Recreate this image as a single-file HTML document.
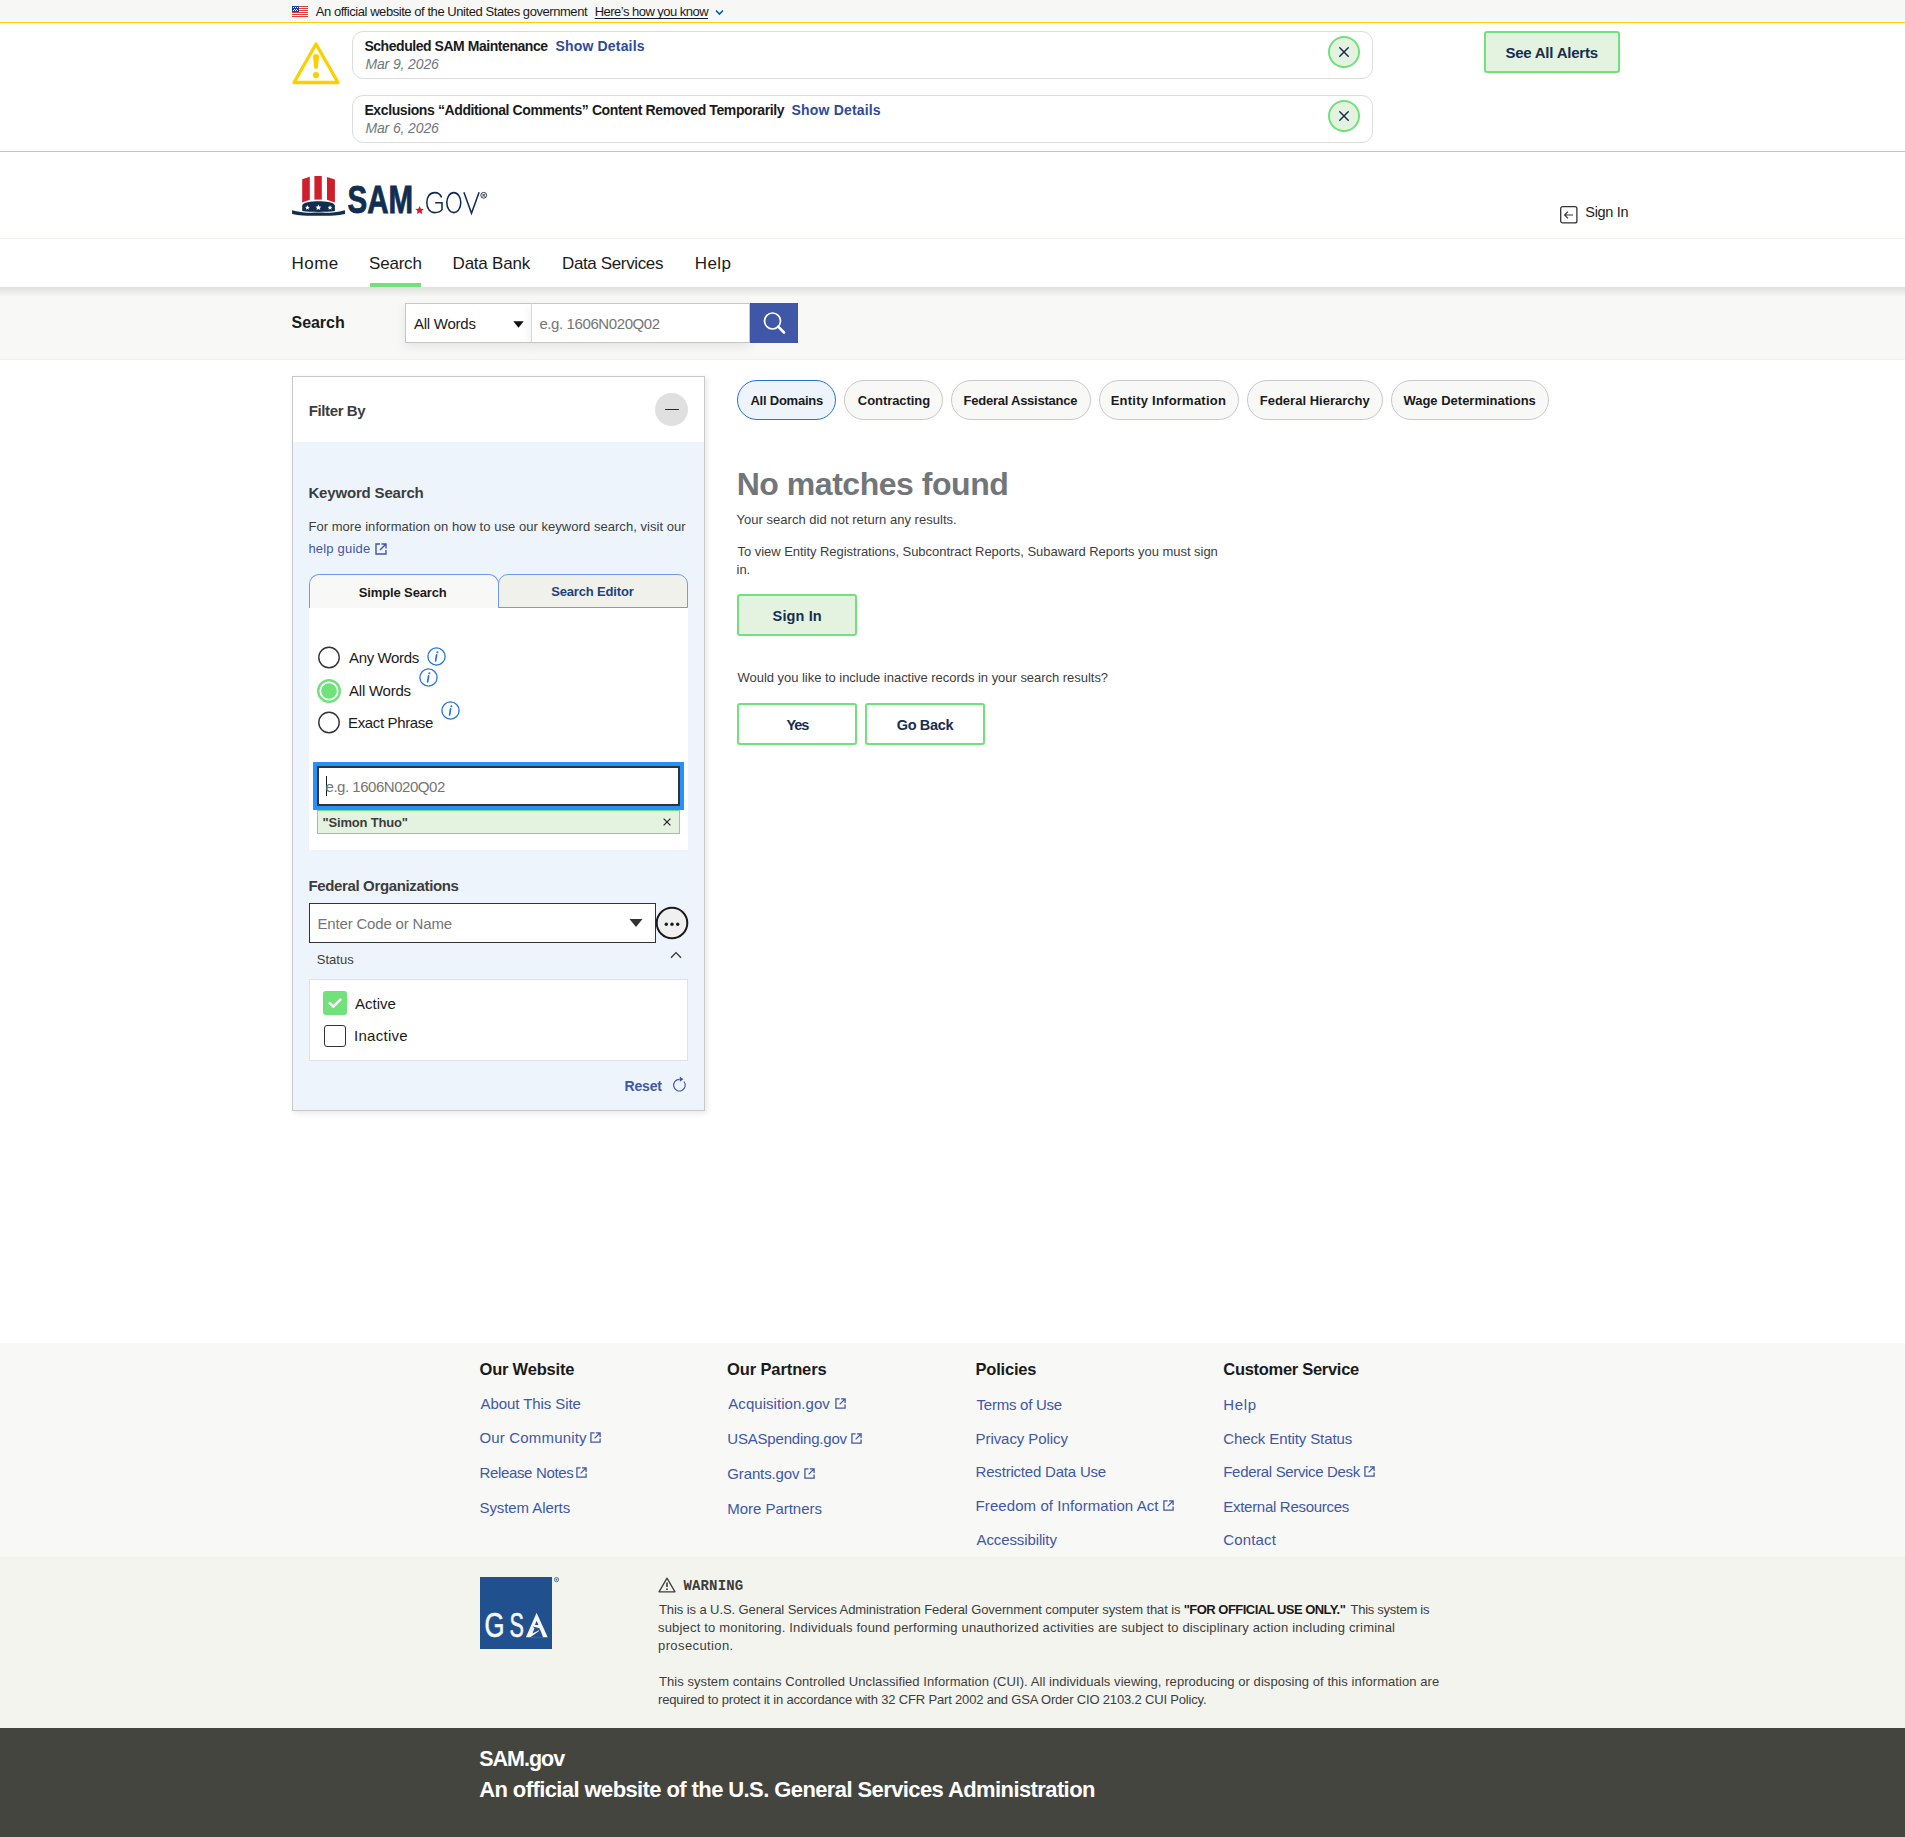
<!DOCTYPE html><html><head><meta charset="utf-8"><title>SAM.gov | Search</title><style>
html,body{margin:0;padding:0;background:#fff;}body{width:1905px;height:1837px;position:relative;overflow:hidden;font-family:"Liberation Sans",sans-serif;}
.t{position:absolute;white-space:nowrap;line-height:1;}
svg{position:absolute;overflow:visible;}
</style></head><body>
<div style="position:absolute;left:0px;top:0px;width:1905px;height:22px;background:#f7f7f5;"></div>
<div style="position:absolute;left:0px;top:22px;width:1905px;height:1px;background:#fcd000;"></div>
<div style="position:absolute;left:0px;top:151px;width:1905px;height:1px;background:#fcd000;"></div>
<div style="position:absolute;left:0px;top:238px;width:1905px;height:1px;background:#f0f0ec;"></div>
<div style="position:absolute;left:0px;top:287px;width:1905px;height:73px;background:#f8f8f6;"></div>
<div style="position:absolute;left:0px;top:287px;width:1905px;height:10px;background:linear-gradient(to bottom, rgba(0,0,0,0.10), rgba(0,0,0,0));"></div>
<div style="position:absolute;left:0px;top:359px;width:1905px;height:1px;background:#f0f0ee;"></div>
<div style="position:absolute;left:0px;top:1343px;width:1905px;height:214px;background:#f8f8f6;"></div>
<div style="position:absolute;left:0px;top:1557px;width:1905px;height:171px;background:#f3f4ee;"></div>
<div style="position:absolute;left:0px;top:1728px;width:1905px;height:109px;background:#44453f;"></div>
<svg style="left:292px;top:6px" width="16" height="11" viewBox="0 0 16 11" shape-rendering="crispEdges">
<rect width="16" height="11" fill="#fff"/>
<g fill="#e0403a"><rect y="0" width="16" height="1"/><rect y="2" width="16" height="1"/><rect y="4" width="16" height="1"/><rect y="6" width="16" height="1"/><rect y="8" width="16" height="1"/><rect y="10" width="16" height="1"/></g>
<rect width="7" height="6" fill="#1c3fa6"/>
<g fill="#fff"><rect x="1" y="1" width="1" height="1"/><rect x="3" y="1" width="1" height="1"/><rect x="5" y="1" width="1" height="1"/><rect x="2" y="3" width="1" height="1"/><rect x="4" y="3" width="1" height="1"/><rect x="1" y="4" width="1" height="1"/><rect x="3" y="4" width="1" height="1"/><rect x="5" y="4" width="1" height="1"/></g>
</svg>
<svg style="left:715px;top:9px" width="9" height="7" viewBox="0 0 9 7"><path d="M1 1.5 L4.5 5 L8 1.5" fill="none" stroke="#005ea2" stroke-width="1.6"/></svg>
<svg style="left:291px;top:41px" width="50" height="45" viewBox="0 0 50 45">
<path d="M25 3 L47 41.5 L3 41.5 Z" fill="none" stroke="#fcd000" stroke-width="3.3" stroke-linejoin="round"/>
<path d="M22 15.8 Q22 12.9 25 12.9 Q28 12.9 28 15.8 L26.9 26.6 Q26.8 28 25 28 Q23.2 28 23.1 26.6 Z" fill="#fcd000"/>
<circle cx="25" cy="34.1" r="3.1" fill="#fcd000"/>
</svg>
<div style="position:absolute;left:352px;top:31px;width:1021px;height:48px;box-sizing:border-box;border:1.5px solid #dcdcdc;border-radius:11px;background:#fff;"></div>
<div style="position:absolute;left:1328px;top:36px;width:32px;height:32px;box-sizing:border-box;border:2px solid #70e17b;border-radius:50%;background:#e3f3df;"></div>
<svg style="left:1339px;top:47px;transform:translateY(0px)" width="10" height="10" viewBox="0 0 10 10"><path d="M0.8 0.8 L9.2 9.2 M9.2 0.8 L0.8 9.2" stroke="#162e51" stroke-width="1.5" stroke-linecap="round"/></svg>
<div style="position:absolute;left:352px;top:95px;width:1021px;height:48px;box-sizing:border-box;border:1.5px solid #dcdcdc;border-radius:11px;background:#fff;"></div>
<div style="position:absolute;left:1328px;top:100px;width:32px;height:32px;box-sizing:border-box;border:2px solid #70e17b;border-radius:50%;background:#e3f3df;"></div>
<svg style="left:1339px;top:47px;transform:translateY(64px)" width="10" height="10" viewBox="0 0 10 10"><path d="M0.8 0.8 L9.2 9.2 M9.2 0.8 L0.8 9.2" stroke="#162e51" stroke-width="1.5" stroke-linecap="round"/></svg>
<div style="position:absolute;left:1484px;top:31px;width:136px;height:42px;box-sizing:border-box;border:2px solid #70e17b;border-radius:3px;background:#e3f3df;"></div>
<svg style="left:291px;top:175px" width="200" height="45" viewBox="0 0 200 45">
<path d="M11.2 4.3 L18.8 1.8 L18.8 24.8 L11.2 27.5 Z" fill="#cf1f2b"/>
<path d="M23.4 1 L30.8 1 L30.8 24.6 L23.4 24.6 Z" fill="#cf1f2b"/>
<path d="M36 2 L43.9 4.4 L43.9 27.5 L36 24.8 Z" fill="#cf1f2b"/>
<path d="M11.2 36 L11.2 30.8 C11.6 27.2 20 26.2 27.5 26.2 C35 26.2 43.5 27.2 43.9 30.8 L43.9 36 C35 37.2 20 37.2 11.2 36 Z" fill="#112e51"/>
<g fill="#fff"><path d="M16.4 30.3 l0.72 1.5 1.65 0.17 -1.24 1.1 0.36 1.62 -1.49 -0.86 -1.49 0.86 0.36 -1.62 -1.24 -1.1 1.65 -0.17z"/><path d="M27.4 29.6 l0.9 1.85 2.05 0.2 -1.55 1.37 0.45 2.02 -1.85 -1.07 -1.85 1.07 0.45 -2.02 -1.55 -1.37 2.05 -0.2z"/><path d="M39 30.3 l0.72 1.5 1.65 0.17 -1.24 1.1 0.36 1.62 -1.49 -0.86 -1.49 0.86 0.36 -1.62 -1.24 -1.1 1.65 -0.17z"/></g>
<path d="M1.1 35.2 C12 38.3 20 37.6 27.5 37.6 C35 37.6 43 38.3 54 35.2 L54 38.9 C43 41.2 35 40.7 27.5 40.7 C20 40.7 12 41.2 1.1 38.9 Z" fill="#112e51"/>
<text x="56.6" y="38" font-family="Liberation Sans" font-weight="700" font-size="38.5" fill="#112e51" stroke="#112e51" stroke-width="0.9" textLength="65.5" lengthAdjust="spacingAndGlyphs">SAM</text>
<path d="M128.6 31 l1.3 2.75 3.0 0.3 -2.25 2.0 0.68 2.95 -2.73 -1.6 -2.73 1.6 0.68 -2.95 -2.25 -2.0 3.0 -0.3z" fill="#cf1f2b"/>
<g fill="none" stroke="#112e51" stroke-width="1.55">
<path d="M150.6 22.6 C149.6 19.6 147 17.6 143.6 17.6 C138.8 17.6 135.8 22 135.8 27.6 C135.8 33.4 138.8 37.6 143.6 37.6 C147.2 37.6 150 36 151 34.6 L151 27.8 L144.2 27.8"/>
<ellipse cx="162.8" cy="27.6" rx="7" ry="10"/>
<path d="M172.9 17.2 L180.5 38.2 L188.1 17.2"/>
<circle cx="192.7" cy="20.3" r="2.9" stroke-width="0.9"/>
</g>
<text x="191.3" y="22.2" font-family="Liberation Sans" font-weight="700" font-size="4.2" fill="#112e51">R</text>
</svg>
<svg style="left:1560px;top:206px" width="18" height="18" viewBox="0 0 18 18"><rect x="0.7" y="0.7" width="16.2" height="16.2" rx="2" fill="none" stroke="#333" stroke-width="1.3"/><path d="M13 9 L4.6 9 M8 5.6 L4.6 9 L8 12.4" fill="none" stroke="#333" stroke-width="1.15"/></svg>
<div style="position:absolute;left:369.5px;top:283px;width:51.5px;height:4px;background:#70e17b;"></div>
<div style="position:absolute;left:405px;top:303px;width:127px;height:40px;box-sizing:border-box;border:1px solid #c6c6c6;background:#fff;box-shadow:0 4px 10px rgba(0,0,0,0.08);"></div>
<div style="position:absolute;left:531px;top:303px;width:219px;height:40px;box-sizing:border-box;border:1px solid #c6c6c6;border-left:1px solid #d8d8d8;background:#fff;box-shadow:0 4px 10px rgba(0,0,0,0.08);"></div>
<svg style="left:513px;top:321px" width="11" height="7" viewBox="0 0 11 7"><path d="M0.3 0.3 L10.7 0.3 L5.5 6.8 Z" fill="#111"/></svg>
<div style="position:absolute;left:750px;top:303px;width:48px;height:40px;background:#3f57a6;"></div>
<svg style="left:762px;top:310px" width="26" height="26" viewBox="0 0 26 26"><circle cx="10.5" cy="11" r="8" fill="none" stroke="#fff" stroke-width="1.7"/><path d="M16.2 16.7 L22 22.5" stroke="#fff" stroke-width="2.6" stroke-linecap="round"/></svg>
<div style="position:absolute;left:292px;top:376px;width:413px;height:735px;box-sizing:border-box;border:1px solid #c9c9c9;background:#eef4fb;box-shadow:2px 2px 6px rgba(0,0,0,0.10);"></div>
<div style="position:absolute;left:293px;top:377px;width:411px;height:65px;background:#fff;"></div>
<div style="position:absolute;left:655px;top:393px;width:33px;height:33px;border-radius:50%;background:#e0e0e0;"></div>
<div style="position:absolute;left:665px;top:408.7px;width:14px;height:1.3px;background:#162e51;border-radius:1px;"></div>
<svg style="left:375px;top:543px" width="12" height="12" viewBox="0 0 12 12"><path d="M5 1 L1 1 L1 11 L11 11 L11 7" fill="none" stroke="#3f57a6" stroke-width="1.4"/><path d="M6.5 1 L11 1 L11 5.5 M11 1 L5 7" fill="none" stroke="#3f57a6" stroke-width="1.4"/></svg>
<div style="position:absolute;left:309px;top:607px;width:379px;height:243px;background:#fff;"></div>
<div style="position:absolute;left:309px;top:574px;width:190px;height:34px;box-sizing:border-box;border:1px solid #6b9cf0;border-bottom:none;border-radius:10px 10px 0 0;background:#f8f8f6;"></div>
<div style="position:absolute;left:498px;top:574px;width:190px;height:34px;box-sizing:border-box;border:1px solid #6b9cf0;border-radius:10px 10px 0 0;background:#f1f1ec;"></div>
<svg style="left:317px;top:646px" width="24" height="24" viewBox="0 0 24 24"><circle cx="12" cy="11.5" r="10.2" fill="#fff" stroke="#333" stroke-width="1.4"/></svg>
<svg style="left:317px;top:679px" width="24" height="24" viewBox="0 0 24 24"><circle cx="12" cy="12" r="10.8" fill="none" stroke="#70e17b" stroke-width="2.4"/><circle cx="12" cy="12" r="7.8" fill="#70e17b"/></svg>
<svg style="left:317px;top:711px" width="24" height="24" viewBox="0 0 24 24"><circle cx="12" cy="11.5" r="10.2" fill="#fff" stroke="#333" stroke-width="1.4"/></svg>
<svg style="left:426.5px;top:646.5px" width="19" height="19" viewBox="0 0 19 19"><circle cx="9.5" cy="9.5" r="8.6" fill="none" stroke="#2672de" stroke-width="1.3"/><circle cx="10.4" cy="5.2" r="1.05" fill="#2672de"/><path d="M9.6 7.8 L8.6 13.8" stroke="#2672de" stroke-width="1.7" stroke-linecap="round"/></svg>
<svg style="left:418.5px;top:667.5px" width="19" height="19" viewBox="0 0 19 19"><circle cx="9.5" cy="9.5" r="8.6" fill="none" stroke="#2672de" stroke-width="1.3"/><circle cx="10.4" cy="5.2" r="1.05" fill="#2672de"/><path d="M9.6 7.8 L8.6 13.8" stroke="#2672de" stroke-width="1.7" stroke-linecap="round"/></svg>
<svg style="left:440.5px;top:700.5px" width="19" height="19" viewBox="0 0 19 19"><circle cx="9.5" cy="9.5" r="8.6" fill="none" stroke="#2672de" stroke-width="1.3"/><circle cx="10.4" cy="5.2" r="1.05" fill="#2672de"/><path d="M9.6 7.8 L8.6 13.8" stroke="#2672de" stroke-width="1.7" stroke-linecap="round"/></svg>
<div style="position:absolute;left:313px;top:762px;width:371px;height:48px;background:#2491ff;"></div>
<div style="position:absolute;left:317px;top:766px;width:363px;height:40px;box-sizing:border-box;border:2px solid #333;background:#fff;"></div>
<div style="position:absolute;left:325.5px;top:776px;width:1.2px;height:20px;background:#1b1b1b;"></div>
<div style="position:absolute;left:317px;top:810px;width:363px;height:24px;box-sizing:border-box;border:1px solid #70e17b;background:#e3f3df;"></div>
<svg style="left:663px;top:818px" width="8" height="8" viewBox="0 0 8 8"><path d="M0.6 0.6 L7.4 7.4 M7.4 0.6 L0.6 7.4" stroke="#222" stroke-width="1.15"/></svg>
<div style="position:absolute;left:309px;top:903px;width:347px;height:40px;box-sizing:border-box;border:1px solid #333;background:#fff;"></div>
<svg style="left:629px;top:918px" width="14" height="10" viewBox="0 0 14 10"><path d="M0.5 1 L13.5 1 L7 9 Z" fill="#333"/></svg>
<svg style="left:655px;top:906px" width="34" height="34" viewBox="0 0 34 34"><circle cx="17" cy="17" r="15.3" fill="#f0f0f0" stroke="#1b1b1b" stroke-width="2"/><circle cx="11.3" cy="18.2" r="1.7" fill="#1b1b1b"/><circle cx="17" cy="18.2" r="1.7" fill="#1b1b1b"/><circle cx="22.7" cy="18.2" r="1.7" fill="#1b1b1b"/></svg>
<svg style="left:670px;top:951px" width="12" height="8" viewBox="0 0 12 8"><path d="M1 6.8 L6 1.6 L11 6.8" fill="none" stroke="#333" stroke-width="1.3"/></svg>
<div style="position:absolute;left:309px;top:979px;width:379px;height:82px;box-sizing:border-box;border:1px solid #dfe1e2;background:#fff;"></div>
<div style="position:absolute;left:323px;top:991px;width:24px;height:24px;border-radius:3px;background:#70e17b;"></div>
<svg style="left:323px;top:991px" width="24" height="24" viewBox="0 0 24 24"><path d="M6.8 12.2 L10.3 15.6 L17.4 8.6" fill="none" stroke="#fff" stroke-width="2.6" stroke-linecap="round" stroke-linejoin="round"/></svg>
<div style="position:absolute;left:324px;top:1025.3px;width:22px;height:22px;box-sizing:border-box;border:1.5px solid #333;border-radius:3px;background:#fff;"></div>
<svg style="left:672px;top:1076px" width="16" height="16" viewBox="0 0 16 16"><path d="M7.6 3.4 A5.8 5.8 0 1 0 11.9 5.5" fill="none" stroke="#3f57a6" stroke-width="1.15"/><path d="M7.8 0.6 L11.3 3.3 L7.8 5.8 Z" fill="#3f57a6"/></svg>
<div style="position:absolute;left:737px;top:380px;width:99px;height:40px;box-sizing:border-box;border:1.5px solid #2672de;border-radius:20px;background:#edf4fb;"></div>
<div style="position:absolute;left:844px;top:380px;width:99px;height:40px;box-sizing:border-box;border:1px solid #c9c9c9;border-radius:20px;background:#f8f8f6;"></div>
<div style="position:absolute;left:951px;top:380px;width:140px;height:40px;box-sizing:border-box;border:1px solid #c9c9c9;border-radius:20px;background:#f8f8f6;"></div>
<div style="position:absolute;left:1099px;top:380px;width:140px;height:40px;box-sizing:border-box;border:1px solid #c9c9c9;border-radius:20px;background:#f8f8f6;"></div>
<div style="position:absolute;left:1247px;top:380px;width:136px;height:40px;box-sizing:border-box;border:1px solid #c9c9c9;border-radius:20px;background:#f8f8f6;"></div>
<div style="position:absolute;left:1391px;top:380px;width:158px;height:40px;box-sizing:border-box;border:1px solid #c9c9c9;border-radius:20px;background:#f8f8f6;"></div>
<div style="position:absolute;left:737px;top:594px;width:120px;height:42px;box-sizing:border-box;border:2px solid #70e17b;border-radius:3px;background:#e3f3df;"></div>
<div style="position:absolute;left:737px;top:703px;width:120px;height:42px;box-sizing:border-box;border:2px solid #70e17b;border-radius:3px;background:#fff;"></div>
<div style="position:absolute;left:865px;top:703px;width:120px;height:42px;box-sizing:border-box;border:2px solid #70e17b;border-radius:3px;background:#fff;"></div>
<svg style="left:590px;top:1432.3px" width="11" height="11" viewBox="0 0 12 12"><path d="M5 1 L1 1 L1 11 L11 11 L11 7" fill="none" stroke="#3f57a6" stroke-width="1.4"/><path d="M6.5 1 L11 1 L11 5.5 M11 1 L5 7" fill="none" stroke="#3f57a6" stroke-width="1.4"/></svg>
<svg style="left:576.3px;top:1467.3px" width="11" height="11" viewBox="0 0 12 12"><path d="M5 1 L1 1 L1 11 L11 11 L11 7" fill="none" stroke="#3f57a6" stroke-width="1.4"/><path d="M6.5 1 L11 1 L11 5.5 M11 1 L5 7" fill="none" stroke="#3f57a6" stroke-width="1.4"/></svg>
<svg style="left:834.6px;top:1398.2px" width="11" height="11" viewBox="0 0 12 12"><path d="M5 1 L1 1 L1 11 L11 11 L11 7" fill="none" stroke="#3f57a6" stroke-width="1.4"/><path d="M6.5 1 L11 1 L11 5.5 M11 1 L5 7" fill="none" stroke="#3f57a6" stroke-width="1.4"/></svg>
<svg style="left:851px;top:1433.1000000000001px" width="11" height="11" viewBox="0 0 12 12"><path d="M5 1 L1 1 L1 11 L11 11 L11 7" fill="none" stroke="#3f57a6" stroke-width="1.4"/><path d="M6.5 1 L11 1 L11 5.5 M11 1 L5 7" fill="none" stroke="#3f57a6" stroke-width="1.4"/></svg>
<svg style="left:803.6px;top:1468.4px" width="11" height="11" viewBox="0 0 12 12"><path d="M5 1 L1 1 L1 11 L11 11 L11 7" fill="none" stroke="#3f57a6" stroke-width="1.4"/><path d="M6.5 1 L11 1 L11 5.5 M11 1 L5 7" fill="none" stroke="#3f57a6" stroke-width="1.4"/></svg>
<svg style="left:1162.5px;top:1500.2px" width="11" height="11" viewBox="0 0 12 12"><path d="M5 1 L1 1 L1 11 L11 11 L11 7" fill="none" stroke="#3f57a6" stroke-width="1.4"/><path d="M6.5 1 L11 1 L11 5.5 M11 1 L5 7" fill="none" stroke="#3f57a6" stroke-width="1.4"/></svg>
<svg style="left:1364px;top:1466.4px" width="11" height="11" viewBox="0 0 12 12"><path d="M5 1 L1 1 L1 11 L11 11 L11 7" fill="none" stroke="#3f57a6" stroke-width="1.4"/><path d="M6.5 1 L11 1 L11 5.5 M11 1 L5 7" fill="none" stroke="#3f57a6" stroke-width="1.4"/></svg>
<svg style="left:480px;top:1577px" width="82" height="72" viewBox="0 0 82 72">
<rect width="72" height="72" fill="#21508f"/>
<text x="4.4" y="60.2" font-family="Liberation Sans" font-weight="400" font-size="34.5" fill="#f7f7f2" stroke="#f7f7f2" stroke-width="0.6" textLength="20" lengthAdjust="spacingAndGlyphs">G</text>
<text x="29.6" y="60.2" font-family="Liberation Sans" font-weight="400" font-size="34.5" fill="#f7f7f2" stroke="#f7f7f2" stroke-width="0.6" textLength="14.4" lengthAdjust="spacingAndGlyphs">S</text>
<path d="M45.9 60.3 L56.6 35.8 L67.7 60.3 Z" fill="#f7f7f2"/>
<path d="M56.6 43.8 L54.9 47.9 L58.4 47.9 Z" fill="#21508f"/>
<path d="M52.8 49.6 L61.6 49.6 L59.6 51.2 L58.8 54.2 L49.9 60.4 L63.2 60.4 L59.6 51.2 L61.6 49.6 Z" fill="#21508f"/>
<path d="M52.8 49.6 L59.6 51.2 L58.6 53.6 L52.4 56.4 L54.4 51.6 Z" fill="#21508f"/>
<circle cx="76.5" cy="2.6" r="2.1" fill="none" stroke="#21508f" stroke-width="0.8"/>
<circle cx="76.5" cy="2.6" r="0.8" fill="#21508f"/>
</svg>
<svg style="left:658px;top:1577px" width="18" height="16" viewBox="0 0 18 16"><path d="M9 1.2 L17 14.8 L1 14.8 Z" fill="none" stroke="#3d3d3d" stroke-width="1.3" stroke-linejoin="round"/><path d="M9 5.6 L9 10" stroke="#3d3d3d" stroke-width="1.6"/><circle cx="9" cy="12.2" r="0.9" fill="#3d3d3d"/></svg>
<div class="t" id="t0" style="left:315.70px;top:5.30px;font-size:13px;font-weight:400;color:#1b1b1b;letter-spacing:-0.440px;">An official website of the United States government</div>
<div class="t" id="t1" style="left:594.70px;top:5.30px;font-size:13px;font-weight:400;color:#1b1b1b;letter-spacing:-0.522px;text-decoration:underline;text-underline-offset:2px;">Here’s how you know</div>
<div class="t" id="t2" style="left:364.40px;top:39.35px;font-size:14px;font-weight:700;color:#1b1b1b;letter-spacing:-0.450px;">Scheduled SAM Maintenance</div>
<div class="t" id="t3" style="left:555.40px;top:39.35px;font-size:14px;font-weight:700;color:#2d4b9b;letter-spacing:0.182px;">Show Details</div>
<div class="t" id="t4" style="left:365.40px;top:56.95px;font-size:14px;font-weight:400;color:#71767a;letter-spacing:-0.120px;font-style:italic;">Mar 9, 2026</div>
<div class="t" id="t5" style="left:364.40px;top:103.35px;font-size:14px;font-weight:700;color:#1b1b1b;letter-spacing:-0.390px;">Exclusions “Additional Comments” Content Removed Temporarily</div>
<div class="t" id="t6" style="left:791.50px;top:103.35px;font-size:14px;font-weight:700;color:#2d4b9b;letter-spacing:0.182px;">Show Details</div>
<div class="t" id="t7" style="left:365.40px;top:120.95px;font-size:14px;font-weight:400;color:#71767a;letter-spacing:-0.120px;font-style:italic;">Mar 6, 2026</div>
<div class="t" id="t8" style="left:1505.40px;top:45.00px;font-size:15px;font-weight:700;color:#162e51;letter-spacing:-0.230px;">See All Alerts</div>
<div class="t" id="t9" style="left:1585.30px;top:205.43px;font-size:14.5px;font-weight:400;color:#1b1b1b;letter-spacing:-0.333px;">Sign In</div>
<div class="t" id="t10" style="left:291.60px;top:254.61px;font-size:17px;font-weight:400;color:#1b1b1b;letter-spacing:0.400px;">Home</div>
<div class="t" id="t11" style="left:369.00px;top:254.61px;font-size:17px;font-weight:400;color:#1b1b1b;letter-spacing:-0.200px;">Search</div>
<div class="t" id="t12" style="left:452.60px;top:254.61px;font-size:17px;font-weight:400;color:#1b1b1b;letter-spacing:-0.226px;">Data Bank</div>
<div class="t" id="t13" style="left:562.00px;top:254.61px;font-size:17px;font-weight:400;color:#1b1b1b;letter-spacing:-0.367px;">Data Services</div>
<div class="t" id="t14" style="left:694.70px;top:254.61px;font-size:17px;font-weight:400;color:#1b1b1b;letter-spacing:0.467px;">Help</div>
<div class="t" id="t15" style="left:291.50px;top:315.36px;font-size:16px;font-weight:700;color:#1b1b1b;letter-spacing:-0.040px;">Search</div>
<div class="t" id="t16" style="left:414.00px;top:316.20px;font-size:15px;font-weight:400;color:#1b1b1b;letter-spacing:-0.250px;">All Words</div>
<div class="t" id="t17" style="left:539.40px;top:316.30px;font-size:15px;font-weight:400;color:#757575;letter-spacing:-0.400px;">e.g. 1606N020Q02</div>
<div class="t" id="t18" style="left:308.80px;top:403.30px;font-size:15px;font-weight:700;color:#3d3d3d;letter-spacing:-0.400px;">Filter By</div>
<div class="t" id="t19" style="left:308.40px;top:485.20px;font-size:15px;font-weight:700;color:#3d3d3d;letter-spacing:-0.169px;">Keyword Search</div>
<div class="t" id="t20" style="left:308.40px;top:519.60px;font-size:13px;font-weight:400;color:#3d3d3d;letter-spacing:0.048px;">For more information on how to use our keyword search, visit our</div>
<div class="t" id="t21" style="left:308.40px;top:541.70px;font-size:13px;font-weight:400;color:#3f57a6;letter-spacing:0.200px;">help guide</div>
<div class="t" id="t22" style="left:358.80px;top:586.30px;font-size:13px;font-weight:700;color:#1b1b1b;letter-spacing:-0.133px;">Simple Search</div>
<div class="t" id="t23" style="left:551.20px;top:585.00px;font-size:13px;font-weight:700;color:#1a4480;letter-spacing:-0.167px;">Search Editor</div>
<div class="t" id="t24" style="left:349.10px;top:650.00px;font-size:15px;font-weight:400;color:#1b1b1b;letter-spacing:-0.375px;">Any Words</div>
<div class="t" id="t25" style="left:349.10px;top:683.00px;font-size:15px;font-weight:400;color:#1b1b1b;letter-spacing:-0.250px;">All Words</div>
<div class="t" id="t26" style="left:348.10px;top:715.00px;font-size:15px;font-weight:400;color:#1b1b1b;letter-spacing:-0.364px;">Exact Phrase</div>
<div class="t" id="t27" style="left:325.50px;top:779.30px;font-size:15px;font-weight:400;color:#757575;letter-spacing:-0.466px;">e.g. 1606N020Q02</div>
<div class="t" id="t28" style="left:322.50px;top:816.00px;font-size:13px;font-weight:700;color:#3d3d3d;letter-spacing:-0.182px;">"Simon Thuo"</div>
<div class="t" id="t29" style="left:308.40px;top:877.50px;font-size:15px;font-weight:700;color:#3d3d3d;letter-spacing:-0.350px;">Federal Organizations</div>
<div class="t" id="t30" style="left:317.50px;top:916.30px;font-size:15px;font-weight:400;color:#757575;letter-spacing:-0.176px;">Enter Code or Name</div>
<div class="t" id="t31" style="left:316.80px;top:953.10px;font-size:13px;font-weight:400;color:#3d3d3d;">Status</div>
<div class="t" id="t32" style="left:355.00px;top:996.30px;font-size:15px;font-weight:400;color:#1b1b1b;">Active</div>
<div class="t" id="t33" style="left:354.00px;top:1028.30px;font-size:15px;font-weight:400;color:#1b1b1b;letter-spacing:0.286px;">Inactive</div>
<div class="t" id="t34" style="left:624.50px;top:1079.15px;font-size:14px;font-weight:700;color:#3f57a6;letter-spacing:-0.150px;">Reset</div>
<div class="t" id="t35" style="left:750.40px;top:394.00px;font-size:13px;font-weight:700;color:#1b1b1b;letter-spacing:-0.220px;">All Domains</div>
<div class="t" id="t36" style="left:857.80px;top:394.00px;font-size:13px;font-weight:700;color:#1b1b1b;letter-spacing:-0.060px;">Contracting</div>
<div class="t" id="t37" style="left:963.60px;top:394.00px;font-size:13px;font-weight:700;color:#1b1b1b;letter-spacing:-0.247px;">Federal Assistance</div>
<div class="t" id="t38" style="left:1110.70px;top:394.00px;font-size:13px;font-weight:700;color:#1b1b1b;letter-spacing:0.235px;">Entity Information</div>
<div class="t" id="t39" style="left:1259.70px;top:394.00px;font-size:13px;font-weight:700;color:#1b1b1b;letter-spacing:0.012px;">Federal Hierarchy</div>
<div class="t" id="t40" style="left:1403.40px;top:394.00px;font-size:13px;font-weight:700;color:#1b1b1b;">Wage Determinations</div>
<div class="t" id="t41" style="left:736.70px;top:468.11px;font-size:32px;font-weight:700;color:#71767a;letter-spacing:-0.466px;">No matches found</div>
<div class="t" id="t42" style="left:736.50px;top:512.80px;font-size:13px;font-weight:400;color:#3d3d3d;letter-spacing:0.026px;">Your search did not return any results.</div>
<div class="t" id="t43" style="left:737.50px;top:544.80px;font-size:13px;font-weight:400;color:#3d3d3d;letter-spacing:-0.038px;">To view Entity Registrations, Subcontract Reports, Subaward Reports you must sign</div>
<div class="t" id="t44" style="left:736.50px;top:562.90px;font-size:13px;font-weight:400;color:#3d3d3d;">in.</div>
<div class="t" id="t45" style="left:772.60px;top:608.83px;font-size:14.5px;font-weight:700;color:#162e51;letter-spacing:0.134px;">Sign In</div>
<div class="t" id="t46" style="left:737.50px;top:671.10px;font-size:13px;font-weight:400;color:#3d3d3d;letter-spacing:-0.031px;">Would you like to include inactive records in your search results?</div>
<div class="t" id="t47" style="left:786.40px;top:717.53px;font-size:14.5px;font-weight:700;color:#162e51;letter-spacing:-1.000px;">Yes</div>
<div class="t" id="t48" style="left:896.70px;top:717.53px;font-size:14.5px;font-weight:700;color:#162e51;letter-spacing:-0.333px;">Go Back</div>
<div class="t" id="t49" style="left:479.50px;top:1360.93px;font-size:16.5px;font-weight:700;color:#1b1b1b;letter-spacing:-0.200px;">Our Website</div>
<div class="t" id="t50" style="left:727.00px;top:1360.93px;font-size:16.5px;font-weight:700;color:#1b1b1b;letter-spacing:-0.110px;">Our Partners</div>
<div class="t" id="t51" style="left:975.60px;top:1360.93px;font-size:16.5px;font-weight:700;color:#1b1b1b;letter-spacing:-0.228px;">Policies</div>
<div class="t" id="t52" style="left:1223.30px;top:1360.93px;font-size:16.5px;font-weight:700;color:#1b1b1b;letter-spacing:-0.293px;">Customer Service</div>
<div class="t" id="t53" style="left:480.50px;top:1395.80px;font-size:15px;font-weight:400;color:#3f57a6;letter-spacing:-0.071px;">About This Site</div>
<div class="t" id="t54" style="left:479.50px;top:1429.90px;font-size:15px;font-weight:400;color:#3f57a6;letter-spacing:0.167px;">Our Community</div>
<div class="t" id="t55" style="left:479.50px;top:1464.90px;font-size:15px;font-weight:400;color:#3f57a6;letter-spacing:-0.350px;">Release Notes</div>
<div class="t" id="t56" style="left:479.50px;top:1500.00px;font-size:15px;font-weight:400;color:#3f57a6;letter-spacing:-0.084px;">System Alerts</div>
<div class="t" id="t57" style="left:728.30px;top:1395.80px;font-size:15px;font-weight:400;color:#3f57a6;letter-spacing:0.043px;">Acquisition.gov</div>
<div class="t" id="t58" style="left:727.30px;top:1430.70px;font-size:15px;font-weight:400;color:#3f57a6;letter-spacing:-0.200px;">USASpending.gov</div>
<div class="t" id="t59" style="left:727.30px;top:1466.00px;font-size:15px;font-weight:400;color:#3f57a6;letter-spacing:-0.134px;">Grants.gov</div>
<div class="t" id="t60" style="left:727.30px;top:1500.60px;font-size:15px;font-weight:400;color:#3f57a6;letter-spacing:-0.033px;">More Partners</div>
<div class="t" id="t61" style="left:976.60px;top:1396.50px;font-size:15px;font-weight:400;color:#3f57a6;letter-spacing:-0.254px;">Terms of Use</div>
<div class="t" id="t62" style="left:975.60px;top:1430.50px;font-size:15px;font-weight:400;color:#3f57a6;letter-spacing:-0.077px;">Privacy Policy</div>
<div class="t" id="t63" style="left:975.60px;top:1464.00px;font-size:15px;font-weight:400;color:#3f57a6;letter-spacing:-0.200px;">Restricted Data Use</div>
<div class="t" id="t64" style="left:975.60px;top:1497.80px;font-size:15px;font-weight:400;color:#3f57a6;letter-spacing:0.080px;">Freedom of Information Act</div>
<div class="t" id="t65" style="left:976.60px;top:1532.30px;font-size:15px;font-weight:400;color:#3f57a6;letter-spacing:-0.117px;">Accessibility</div>
<div class="t" id="t66" style="left:1223.30px;top:1396.50px;font-size:15px;font-weight:400;color:#3f57a6;letter-spacing:0.667px;">Help</div>
<div class="t" id="t67" style="left:1223.30px;top:1430.50px;font-size:15px;font-weight:400;color:#3f57a6;letter-spacing:-0.111px;">Check Entity Status</div>
<div class="t" id="t68" style="left:1223.30px;top:1464.00px;font-size:15px;font-weight:400;color:#3f57a6;letter-spacing:-0.337px;">Federal Service Desk</div>
<div class="t" id="t69" style="left:1223.30px;top:1498.60px;font-size:15px;font-weight:400;color:#3f57a6;letter-spacing:-0.294px;">External Resources</div>
<div class="t" id="t70" style="left:1223.30px;top:1532.30px;font-size:15px;font-weight:400;color:#3f57a6;letter-spacing:0.134px;">Contact</div>
<div class="t" id="t71" style="left:683.40px;top:1578.85px;font-size:14px;font-weight:700;color:#3d3d3d;letter-spacing:0.167px;font-family:'Liberation Mono', monospace;">WARNING</div>
<div class="t" id="t72" style="left:659.00px;top:1603.00px;font-size:13px;font-weight:400;color:#3d3d3d;letter-spacing:-0.091px;">This is a U.S. General Services Administration Federal Government computer system that is</div>
<div class="t" id="t73" style="left:1183.70px;top:1603.00px;font-size:13px;font-weight:700;color:#1b1b1b;letter-spacing:-0.522px;">"FOR OFFICIAL USE ONLY."</div>
<div class="t" id="t74" style="left:1350.50px;top:1603.00px;font-size:13px;font-weight:400;color:#3d3d3d;letter-spacing:-0.262px;">This system is</div>
<div class="t" id="t75" style="left:658.00px;top:1620.60px;font-size:13px;font-weight:400;color:#3d3d3d;letter-spacing:0.180px;">subject to monitoring. Individuals found performing unauthorized activities are subject to disciplinary action including criminal</div>
<div class="t" id="t76" style="left:658.00px;top:1638.70px;font-size:13px;font-weight:400;color:#3d3d3d;letter-spacing:0.400px;">prosecution.</div>
<div class="t" id="t77" style="left:659.00px;top:1675.00px;font-size:13px;font-weight:400;color:#3d3d3d;letter-spacing:0.062px;">This system contains Controlled Unclassified Information (CUI). All individuals viewing, reproducing or disposing of this information are</div>
<div class="t" id="t78" style="left:658.00px;top:1692.60px;font-size:13px;font-weight:400;color:#3d3d3d;letter-spacing:-0.173px;">required to protect it in accordance with 32 CFR Part 2002 and GSA Order CIO 2103.2 CUI Policy.</div>
<div class="t" id="t79" style="left:479.20px;top:1748.80px;font-size:21.5px;font-weight:700;color:#fff;letter-spacing:-1.000px;">SAM.gov</div>
<div class="t" id="t80" style="left:479.20px;top:1779.18px;font-size:22px;font-weight:700;color:#fff;letter-spacing:-0.597px;">An official website of the U.S. General Services Administration</div>
</body></html>
